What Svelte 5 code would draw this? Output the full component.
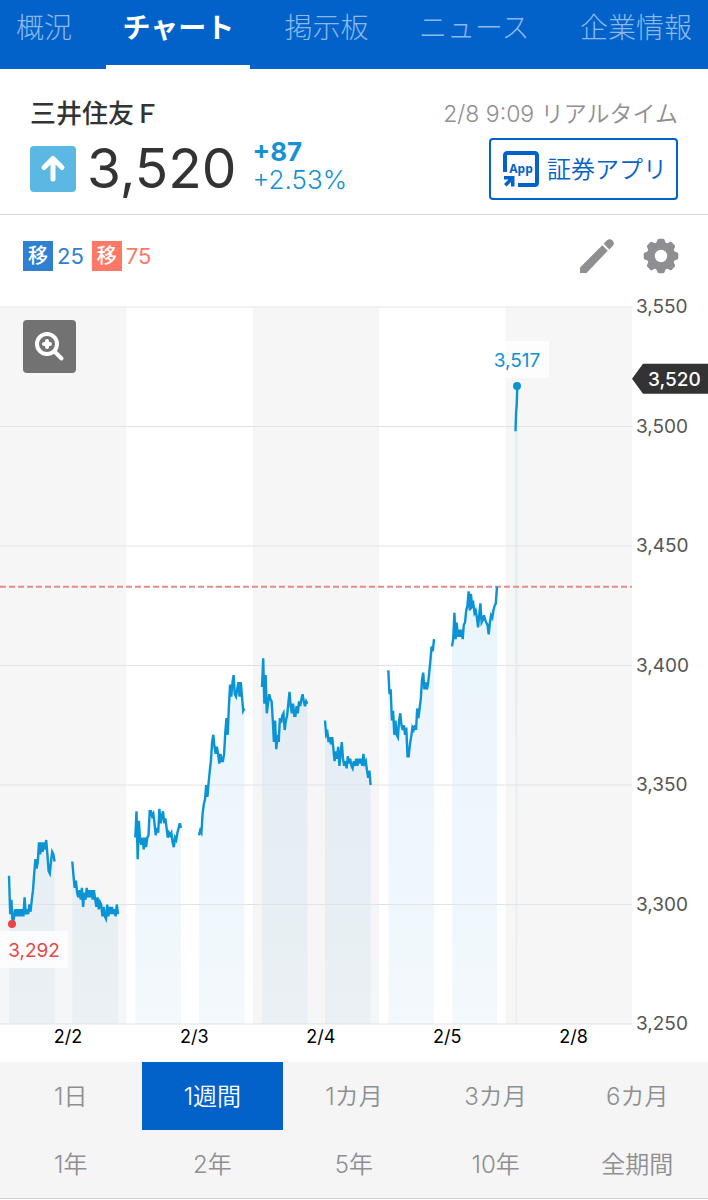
<script lang="ts">
	const tabs = ['概況', 'チャート', '掲示板', 'ニュース', '企業情報'];
	const ranges = ['1日', '1週間', '1カ月', '3カ月', '6カ月', '1年', '2年', '5年', '10年', '全期間'];
	const days = ['2/2', '2/3', '2/4', '2/5', '2/8'];
	const ticks = [3550, 3500, 3450, 3400, 3350, 3300, 3250];

	const previousClose = 3433;
	const currentPrice = 3520;

	let activeTab = $state('チャート');
	let activeRange = $state('1週間');

	// plot area, in svg units
	const plotWidth = 632;
	const plotTop = 9;
	const plotHeight = 717;
	const dayWidth = plotWidth / days.length;

	// morning and afternoon session of each day
	const sessions = [
		{
			from: 9,
			to: 54.6,
			prices: [
				3312, 3296, 3302, 3292, 3294, 3298, 3295, 3298, 3295, 3298, 3295, 3298, 3295, 3303, 3296, 3298, 3296, 3300,
				3297, 3302, 3306, 3313, 3319, 3315, 3318, 3326, 3321, 3326, 3322, 3326, 3323, 3327, 3321, 3314, 3313, 3318,
				3322, 3321, 3318
			]
		},
		{
			from: 72.3,
			to: 118,
			prices: [
				3318, 3312, 3307, 3310, 3305, 3303, 3306, 3302, 3307, 3299, 3305, 3302, 3307, 3303, 3306, 3303, 3306, 3302,
				3306, 3302, 3299, 3303, 3298, 3301, 3300, 3295, 3299, 3295, 3294, 3300, 3295, 3299, 3296, 3299, 3296, 3298,
				3295, 3300, 3296
			]
		},
		{
			from: 135.3,
			to: 181,
			prices: [
				3328, 3339, 3319, 3335, 3327, 3325, 3328, 3323, 3328, 3324, 3328, 3329, 3339, 3339, 3337, 3338, 3334, 3329,
				3332, 3330, 3340, 3334, 3337, 3339, 3334, 3336, 3332, 3328, 3330, 3329, 3330, 3326, 3324, 3328, 3327, 3330,
				3332, 3334, 3332
			]
		},
		{
			from: 199,
			to: 244.4,
			prices: [
				3329, 3331, 3330, 3338, 3342, 3344, 3350, 3345, 3351, 3356, 3360, 3368, 3371, 3366, 3363, 3366, 3363, 3359,
				3363, 3360, 3360, 3363, 3372, 3378, 3371, 3383, 3392, 3387, 3393, 3396, 3388, 3387, 3390, 3393, 3387, 3393,
				3387, 3381, 3382
			]
		},
		{
			from: 262,
			to: 307.4,
			prices: [
				3391, 3403, 3384, 3396, 3380, 3384, 3388, 3386, 3385, 3377, 3368, 3377, 3365, 3371, 3368, 3378, 3376, 3379,
				3380, 3373, 3377, 3379, 3384, 3389, 3383, 3380, 3384, 3379, 3379, 3383, 3380, 3385, 3383, 3386, 3388, 3385,
				3383, 3385, 3384
			]
		},
		{
			from: 325,
			to: 370.6,
			prices: [
				3377, 3371, 3372, 3368, 3370, 3367, 3370, 3365, 3360, 3364, 3361, 3366, 3358, 3363, 3368, 3361, 3358, 3360,
				3357, 3362, 3359, 3361, 3358, 3357, 3360, 3358, 3361, 3358, 3361, 3359, 3361, 3358, 3363, 3359, 3360, 3356,
				3353, 3356, 3350
			]
		},
		{
			from: 388.3,
			to: 434,
			prices: [
				3398, 3388, 3390, 3377, 3381, 3371, 3377, 3371, 3370, 3377, 3380, 3375, 3373, 3375, 3371, 3374, 3362, 3362,
				3367, 3370, 3374, 3373, 3375, 3373, 3382, 3378, 3382, 3386, 3394, 3397, 3390, 3393, 3390, 3392, 3397, 3402,
				3408, 3406, 3411
			]
		},
		{
			from: 452,
			to: 497,
			prices: [
				3408, 3411, 3422, 3411, 3418, 3412, 3415, 3412, 3415, 3411, 3417, 3418, 3423, 3425, 3431, 3423, 3430, 3425,
				3426, 3422, 3423, 3420, 3416, 3421, 3426, 3418, 3419, 3421, 3419, 3418, 3417, 3413, 3418, 3421, 3420, 3423,
				3425, 3426, 3433
			]
		},
		{ from: 515.5, to: 517.3, prices: [3498, 3506, 3509, 3517] }
	];

	function y(price: number) {
		return plotTop + ((3550 - price) / 300) * plotHeight;
	}

	function linePath(session: { from: number; to: number; prices: number[] }) {
		const step = (session.to - session.from) / (session.prices.length - 1);
		return session.prices
			.map((p, i) => `${i ? 'L' : 'M'}${(session.from + i * step).toFixed(1)} ${y(p).toFixed(1)}`)
			.join('');
	}

	function areaPath(session: { from: number; to: number; prices: number[] }) {
		return `${linePath(session)}V${y(3250)}H${session.from}Z`;
	}
</script>

<nav class="tabs">
	{#each tabs as tab}
		<a href="#{tab}" class:active={tab === activeTab} onclick={() => (activeTab = tab)}>{tab}</a>
	{/each}
</nav>

<header class="quote">
	<div class="quote-main">
		<h1>三井住友Ｆ</h1>
		<div class="price-row">
			<svg class="trend" viewBox="0 0 46 46" aria-hidden="true">
				<rect width="46" height="46" rx="4" fill="#5ab8e2" />
				<path d="M23 33V14M14 21.5l9-9 9 9" fill="none" stroke="#fff" stroke-width="5" stroke-linecap="round" stroke-linejoin="round" />
			</svg>
			<span class="price">3,520</span>
			<div class="change">
				<strong>+87</strong>
				<span>+2.53%</span>
			</div>
		</div>
	</div>
	<div class="quote-side">
		<span class="time">2/8 9:09 リアルタイム</span>
		<a class="app-link" href="#app">
			<svg viewBox="0 0 36 36" aria-hidden="true">
				<path d="M2 21V4.500Q2 2 4.500 2H31.500Q34 2 34 4.500V31.500Q34 34 31.500 34H15" fill="none" stroke="#0262c9" stroke-width="4" />
				<path d="M1 25h10.500v10.500H8v-4.500L3.500 35.500 1 33l4.500-4.500H1z" fill="#0262c9" />
				<text x="18" y="22" text-anchor="middle">App</text>
			</svg>
			<span>証券アプリ</span>
		</a>
	</div>
</header>

<div class="toolbar">
	<div class="legend">
		<span class="chip short">移</span><span class="period short-text">25</span>
		<span class="chip long">移</span><span class="period long-text">75</span>
	</div>
	<div class="tools">
		<button aria-label="描画">
			<svg viewBox="0 0 36 36" fill="#8e8e93">
				<path d="M1 29.500 23.300 7.200l5.500 5.500L7.500 35H1z" />
				<path d="M24.700 5.800l3-3.200q2.800-2.800 5.700 0 2.800 2.800.2 5.500l-3.300 3.300z" />
			</svg>
		</button>
		<button aria-label="設定">
			<svg viewBox="-18 -18 36 36" fill="#8e8e93">
				<mask id="hub">
					<rect x="-18" y="-18" width="36" height="36" fill="#fff" />
					<circle r="6.200" fill="#000" />
				</mask>
				<g mask="url(#hub)">
					<circle r="14" />
					{#each [0, 45, 90, 135, 180, 225, 270, 315] as angle}
						<path d="M-6-12Q-4.300-13-3.800-15.500-3.500-17.300-2-17.300h4Q3.500-17.300 3.800-15.500 4.300-13 6-12z" transform="rotate({angle})" />
					{/each}
				</g>
			</svg>
		</button>
	</div>
</div>

<main class="chart">
	<svg class="plot" viewBox="0 0 708 764" role="img" aria-label="株価チャート 1週間">
		<defs>
			<linearGradient id="area" gradientUnits="userSpaceOnUse" x1="0" y1="280" x2="0" y2="726">
				<stop offset="0" stop-color="#0a84d6" stop-opacity="0.09" />
				<stop offset="1" stop-color="#0a84d6" stop-opacity="0.05" />
			</linearGradient>
		</defs>

		{#each days as day, i}
			{#if i % 2 === 0}
				<rect x={i * dayWidth} y={plotTop} width={dayWidth} height={plotHeight} fill="#f6f6f6" />
			{/if}
			<text class="day" x={i * dayWidth + 68} y="745">{day}</text>
		{/each}

		{#each sessions as session}
			<path d={areaPath(session)} fill="url(#area)" />
		{/each}

		{#each ticks as tick}
			<line x1="0" x2={plotWidth} y1={y(tick)} y2={y(tick)} stroke="#e2e3e8" />
			<text class="tick" x="636" y={y(tick) + 6}>{tick.toLocaleString('en-US')}</text>
		{/each}

		<line class="previous" x1="0" x2={plotWidth} y1={y(previousClose)} y2={y(previousClose)} />

		{#each sessions as session}
			<path class="line" d={linePath(session)} />
		{/each}

		<rect x="485" y="43" width="64" height="37" fill="#fff" fill-opacity="0.8" />
		<text class="mark high" x="517" y="69">3,517</text>
		<circle cx="517" cy="88" r="4" fill="#0a94d6" />

		<rect x="0" y="633" width="68" height="37" fill="#fff" fill-opacity="0.8" />
		<text class="mark low" x="34" y="659">3,292</text>
		<circle cx="12" cy="626" r="4" fill="#ea4444" />

		<path d="M632 {y(currentPrice)}l11-15h65v30h-65z" fill="#333" />
		<text class="current" x="648" y={y(currentPrice) + 7}>3,520</text>
	</svg>

	<button class="zoom" aria-label="拡大">
		<svg viewBox="1 1 30 30" fill="none" stroke="#fff" stroke-linecap="round">
			<circle cx="13" cy="13" r="10" stroke-width="4" />
			<path d="M21 21l6.500 6.500" stroke-width="4" />
			<path d="M13 10v6M10 13h6" stroke-width="4" />
		</svg>
	</button>
</main>

<div class="ranges">
	{#each ranges as range}
		<button class:active={range === activeRange} onclick={() => (activeRange = range)}>{range}</button>
	{/each}
</div>

<style>
	:global(body) {
		background: #fff;
		color: #333;
		font-family: Inter, 'Noto Sans CJK JP', sans-serif;
	}

	button {
		border: 0;
		padding: 0;
		background: none;
		font-family: inherit;
		cursor: pointer;
	}

	svg {
		display: block;
	}

	.tabs {
		display: flex;
		justify-content: space-between;
		background: #0262c9;
	}

	.tabs a {
		padding: 8px 16px 17px;
		border-bottom: 4px solid transparent;
		color: #8bb9ea;
		font-size: 28px;
		font-weight: 300;
		line-height: 40px;
		text-decoration: none;
		white-space: nowrap;
	}

	.tabs a.active {
		border-bottom-color: #fff;
		color: #fff;
		font-weight: 700;
	}

	.quote {
		display: flex;
		justify-content: space-between;
		padding: 29px 30px 14px;
		border-bottom: 1px solid #d8d8d8;
	}

	h1 {
		margin: 0;
		font-size: 26px;
		font-weight: 500;
		line-height: 32px;
	}

	.price-row {
		display: flex;
		align-items: center;
		margin-top: 8px;
	}

	.trend {
		width: 46px;
		height: 46px;
	}

	.price {
		margin: 0 16px 0 11px;
		font-size: 55px;
		line-height: 61px;
	}

	.change {
		display: flex;
		flex-direction: column;
		padding-bottom: 5px;
		color: #1492d4;
		font-size: 26px;
		font-weight: 300;
		line-height: 28px;
	}

	.change strong {
		font-weight: 700;
	}

	.quote-side {
		display: flex;
		flex-direction: column;
		align-items: flex-end;
	}

	.time {
		color: #8e8e93;
		font-size: 23px;
		font-weight: 350;
		line-height: 32px;
	}

	.app-link {
		display: flex;
		align-items: center;
		gap: 8px;
		box-sizing: border-box;
		height: 62px;
		margin-top: 8px;
		padding: 0 9px 0 12px;
		border: 2px solid #0262c9;
		border-radius: 4px;
		color: #0262c9;
		font-size: 24px;
		font-weight: 350;
		text-decoration: none;
	}

	.app-link span {
		padding-bottom: 4px;
	}

	.app-link svg {
		width: 36px;
		height: 36px;
	}

	.app-link text {
		fill: #0262c9;
		font-family: 'Noto Sans', sans-serif;
		font-size: 12px;
		font-weight: 700;
	}

	.toolbar {
		display: flex;
		align-items: center;
		justify-content: space-between;
		box-sizing: border-box;
		height: 83px;
		padding: 0 29px 2px 23px;
	}

	.legend {
		display: flex;
		align-items: center;
		font-size: 22px;
	}

	.chip {
		width: 30px;
		color: #fff;
		font-size: 20px;
		font-weight: 500;
		line-height: 30px;
		text-align: center;
	}

	.period {
		margin: 0 8px 0 4px;
	}

	.short {
		background: #2f80d2;
	}

	.long {
		background: #ff7866;
	}

	.short-text {
		color: #2f80d2;
	}

	.long-text {
		color: #ff7866;
	}

	.tools {
		display: flex;
		gap: 28px;
	}

	.tools svg {
		width: 36px;
		height: 36px;
	}

	.chart {
		position: relative;
	}

	.plot {
		overflow: visible;
	}

	.plot text {
		font-size: 19px;
	}

	.plot .day {
		fill: #000;
		font-size: 18px;
		text-anchor: middle;
	}

	.tick {
		fill: #555;
	}

	.mark {
		text-anchor: middle;
	}

	.high {
		fill: #0a94d6;
	}

	.low {
		fill: #ea4444;
	}

	.current {
		fill: #fff;
		font-weight: 500;
	}

	.line {
		fill: none;
		stroke: #0a94d6;
		stroke-width: 2.4;
	}

	.previous {
		stroke: #e88a8a;
		stroke-width: 2;
		stroke-dasharray: 6 3;
	}

	.zoom {
		position: absolute;
		top: 22px;
		left: 23px;
		display: flex;
		align-items: center;
		justify-content: center;
		width: 53px;
		height: 53px;
		border-radius: 4px;
		background: #727272;
	}

	.zoom svg {
		width: 30px;
		height: 30px;
	}

	.ranges {
		display: grid;
		grid-template-columns: repeat(5, 1fr);
		border-bottom: 1px solid #cfcfd2;
		background: #f5f5f5;
	}

	.ranges button {
		height: 68px;
		padding-bottom: 4px;
		color: #8e8e93;
		font-size: 24px;
		font-weight: 350;
	}

	.ranges button.active {
		background: #0262c9;
		color: #fff;
	}
</style>
